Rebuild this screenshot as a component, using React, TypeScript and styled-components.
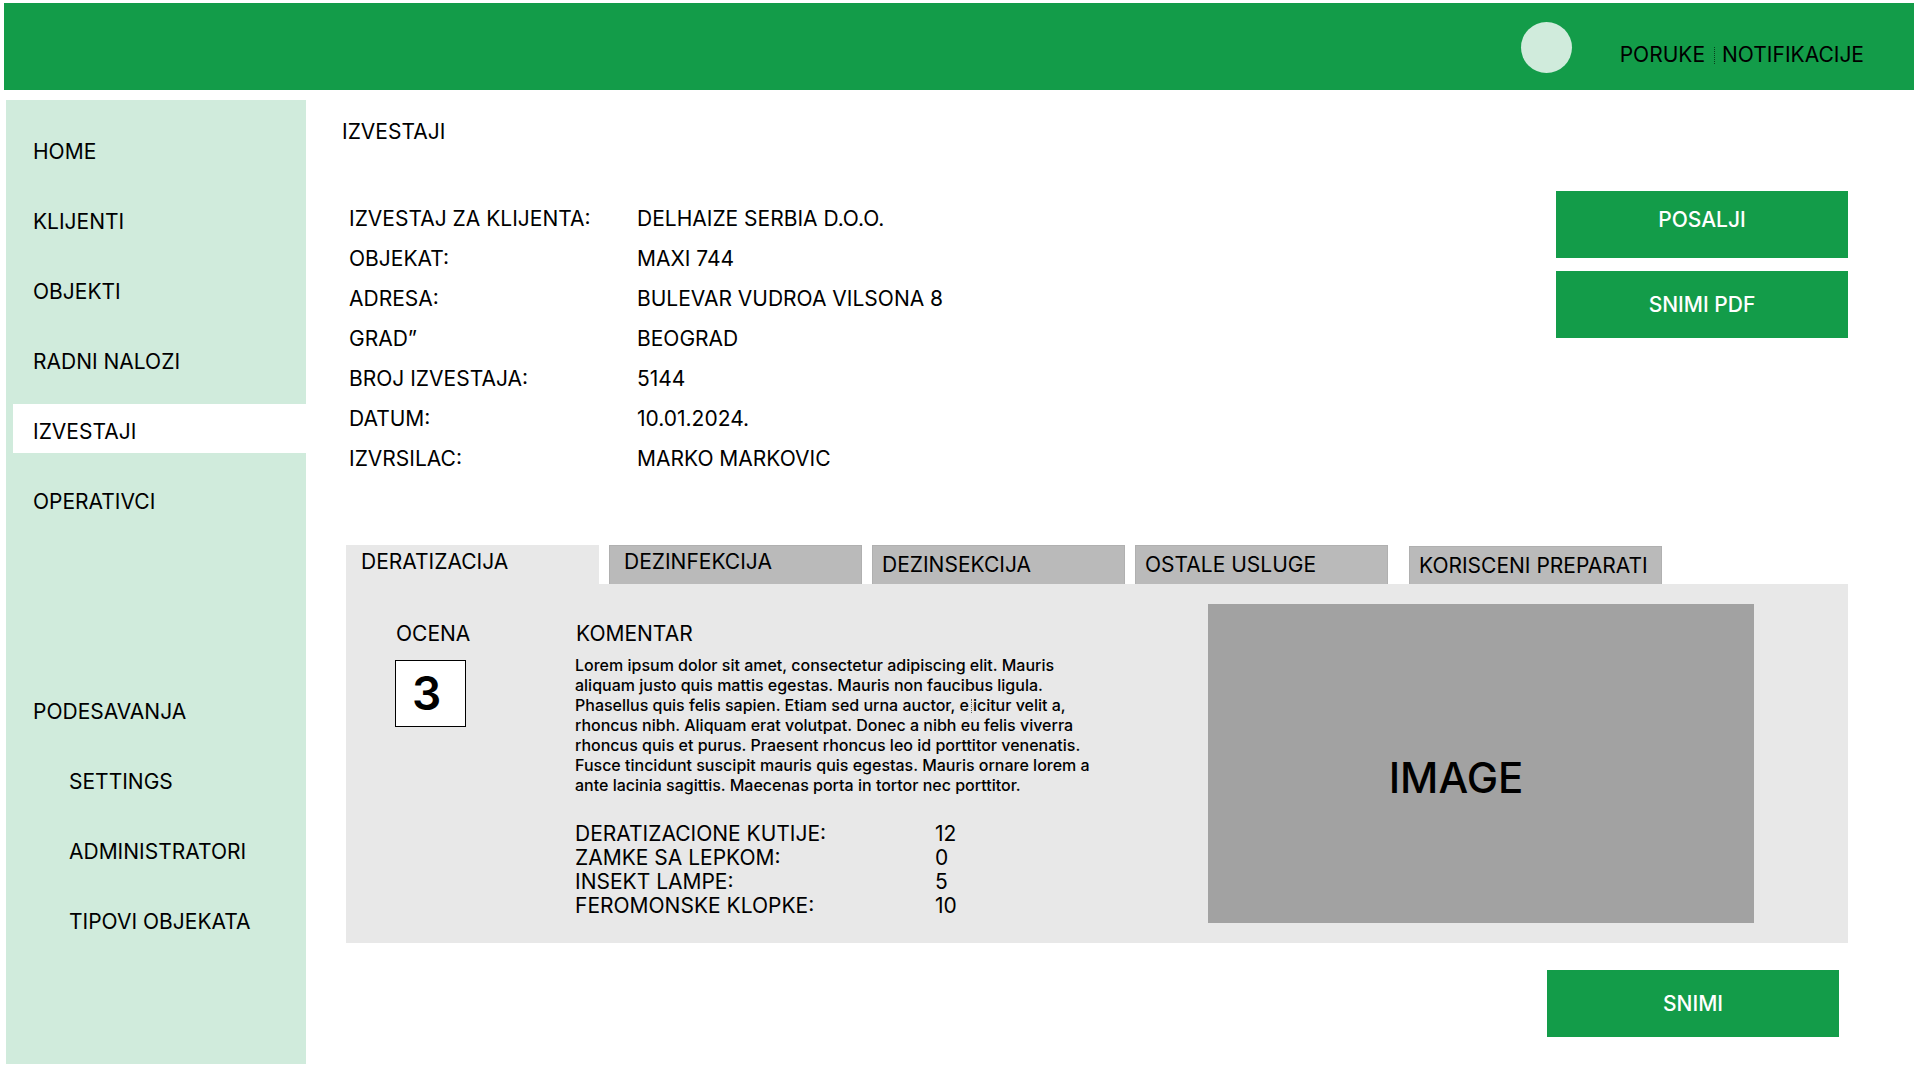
import React, { useState } from "react";
import styled, { createGlobalStyle } from "styled-components";

const color = {
  green: "#139c49",
  mint: "#d0ebdc",
  panel: "#e8e8e8",
  tab: "#bababa",
  tabEdge: "#b0b0b0",
  image: "#a2a2a2",
};

const GlobalStyle = createGlobalStyle`
  *, *::before, *::after { box-sizing: border-box; }
  body {
    margin: 0;
    background: #fff;
    color: #000;
    font-family: Inter, "Liberation Sans", sans-serif;
    font-size: 21px;
    line-height: 26px;
  }
  h1, h2, p, dl, dd, ul { margin: 0; padding: 0; }
  button, input { font: inherit; color: inherit; border-radius: 0; }
  a { color: inherit; text-decoration: none; }
`;

const Page = styled.div`
  min-height: 100vh;
  display: flex;
  flex-direction: column;
  padding: 3px 6px 16px 4px;
`;

const Header = styled.header`
  height: 87px;
  padding: 0 50px 17px;
  display: flex;
  justify-content: flex-end;
  align-items: flex-end;
  gap: 48px;
  background: ${color.green};
`;

const Avatar = styled.div`
  width: 51px;
  height: 51px;
  border-radius: 50%;
  background: ${color.mint};
`;

const HeaderLinks = styled.nav`
  display: flex;
  align-items: center;
  gap: 7px;
  line-height: 36px;
`;

const ThinBar = styled.span`
  display: inline-block;
  width: 3px;
  height: 17px;
  border-right: 1px dotted #000;
  opacity: 0.6;
`;

const InlineBar = styled(ThinBar)`
  height: 14px;
  margin-right: 1px;
  vertical-align: -2px;
`;

const Body = styled.div`
  flex: 1;
  display: flex;
  padding: 10px 0 0 2px;
`;

const Sidebar = styled.nav`
  flex: 0 0 300px;
  padding: 24px 0 24px 7px;
  background: ${color.mint};
`;

const NavList = styled.ul`
  list-style: none;
  display: flex;
  flex-direction: column;
  gap: 21px;

  & + & {
    margin-top: 161px;
  }
`;

const NavLink = styled.a<{ $active?: boolean; $nested?: boolean }>`
  display: flex;
  align-items: center;
  height: 49px;
  padding: 6px 0 0 ${(p) => (p.$nested ? 56 : 20)}px;
  background: ${(p) => (p.$active ? "#fff" : "transparent")};
`;

const Main = styled.main`
  flex: 1;
  min-width: 0;
  padding: 19px 66px 0 36px;
`;

const Title = styled.h1`
  font-size: 21px;
  font-weight: 400;
`;

const Report = styled.div`
  padding-left: 4px;
`;

const Summary = styled.section`
  display: flex;
  justify-content: space-between;
  align-items: flex-start;
  margin-top: 46px;
`;

const Details = styled.dl`
  display: grid;
  grid-template-columns: 288px auto;
  padding: 8px 0 0 3px;
  line-height: 40px;
`;

const Actions = styled.div`
  display: flex;
  flex-direction: column;
  gap: 13px;
`;

const ActionButton = styled.button<{ $raised?: boolean }>`
  width: 292px;
  height: 67px;
  padding: 0 0 ${(p) => (p.$raised ? 10 : 0)}px;
  border: 0;
  background: ${color.green};
  color: #fff;
  font-weight: 500;
  cursor: pointer;
`;

const Tabs = styled.div`
  display: flex;
  align-items: flex-end;
  gap: 10px;
  margin-top: 66px;
`;

const Tab = styled.button<{ $active: boolean; $lead?: boolean; $apart?: boolean }>`
  flex: 0 1 253px;
  height: ${(p) => (p.$apart ? 38 : 39)}px;
  margin-left: ${(p) => (p.$apart ? 11 : 0)}px;
  padding: ${(p) => (p.$lead ? "0 0 6px 14px" : "0 0 0 9px")};
  border: 1px solid ${(p) => (p.$active ? color.panel : color.tabEdge)};
  border-bottom: 0;
  background: ${(p) => (p.$active ? color.panel : color.tab)};
  text-align: left;
  white-space: nowrap;
  cursor: pointer;
`;

const Panel = styled.section`
  display: flex;
  padding: 20px 94px 20px 49px;
  background: ${color.panel};
`;

const Score = styled.div`
  flex: 0 0 180px;
  display: flex;
  flex-direction: column;
  align-items: flex-start;
  gap: 13px;
  padding-top: 17px;
`;

const ScoreLabel = styled.label`
  padding-left: 1px;
`;

const ScoreInput = styled.input`
  width: 71px;
  height: 67px;
  padding: 0 0 2px 16px;
  border: 1px solid #000;
  background: #fff;
  font-size: 46px;
  font-weight: 600;
  line-height: 56px;
`;

const Comment = styled.div`
  flex: 0 1 526px;
  padding-top: 17px;
`;

const CommentTitle = styled.h2`
  padding-left: 1px;
  font-size: 21px;
  font-weight: 400;
`;

const CommentText = styled.p`
  margin-top: 8px;
  font-size: 16px;
  font-weight: 500;
  line-height: 20px;
`;

const Counts = styled.dl`
  display: grid;
  grid-template-columns: 360px auto;
  margin-top: 27px;
  line-height: 24px;
`;

const Picture = styled.div`
  flex: 0 0 546px;
  height: 319px;
  margin-left: auto;
  padding: 28px 50px 0 0;
  display: flex;
  align-items: center;
  justify-content: center;
  background: ${color.image};
  font-size: 42px;
  font-weight: 500;
  line-height: 48px;
`;

const Footer = styled.div`
  display: flex;
  justify-content: flex-end;
  padding: 27px 9px 27px 0;
`;

const mainNav = ["HOME", "KLIJENTI", "OBJEKTI", "RADNI NALOZI", "IZVESTAJI", "OPERATIVCI"];
const settingsNav = ["SETTINGS", "ADMINISTRATORI", "TIPOVI OBJEKATA"];

const details = [
  ["IZVESTAJ ZA KLIJENTA:", "DELHAIZE SERBIA D.O.O."],
  ["OBJEKAT:", "MAXI 744"],
  ["ADRESA:", "BULEVAR VUDROA VILSONA 8"],
  ["GRAD”", "BEOGRAD"],
  ["BROJ IZVESTAJA:", "5144"],
  ["DATUM:", "10.01.2024."],
  ["IZVRSILAC:", "MARKO MARKOVIC"],
];

const tabs = [
  { name: "DERATIZACIJA", lead: true },
  { name: "DEZINFEKCIJA", lead: true },
  { name: "DEZINSEKCIJA" },
  { name: "OSTALE USLUGE" },
  { name: "KORISCENI PREPARATI", apart: true },
];

const counts = [
  ["DERATIZACIONE KUTIJE:", "12"],
  ["ZAMKE SA LEPKOM:", "0"],
  ["INSEKT LAMPE:", "5"],
  ["FEROMONSKE KLOPKE:", "10"],
];

export default function App() {
  const [active, setActive] = useState("DERATIZACIJA");

  return (
    <Page>
      <GlobalStyle />
      <Header>
        <Avatar />
        <HeaderLinks>
          <a href="#poruke">PORUKE</a>
          <ThinBar />
          <a href="#notifikacije">NOTIFIKACIJE</a>
        </HeaderLinks>
      </Header>
      <Body>
        <Sidebar>
          <NavList>
            {mainNav.map((name) => (
              <li key={name}>
                <NavLink href="#" $active={name === "IZVESTAJI"}>{name}</NavLink>
              </li>
            ))}
          </NavList>
          <NavList>
            <li>
              <NavLink href="#">PODESAVANJA</NavLink>
            </li>
            {settingsNav.map((name) => (
              <li key={name}>
                <NavLink href="#" $nested>{name}</NavLink>
              </li>
            ))}
          </NavList>
        </Sidebar>
        <Main>
          <Title>IZVESTAJI</Title>
          <Report>
            <Summary>
              <Details>
                {details.map(([label, value]) => (
                  <React.Fragment key={label}>
                    <dt>{label}</dt>
                    <dd>{value}</dd>
                  </React.Fragment>
                ))}
              </Details>
              <Actions>
                <ActionButton type="button" $raised>POSALJI</ActionButton>
                <ActionButton type="button">SNIMI PDF</ActionButton>
              </Actions>
            </Summary>
            <Tabs role="tablist">
              {tabs.map((tab) => (
                <Tab
                  key={tab.name}
                  type="button"
                  role="tab"
                  aria-selected={active === tab.name}
                  $active={active === tab.name}
                  $lead={tab.lead}
                  $apart={tab.apart}
                  onClick={() => setActive(tab.name)}
                >
                  {tab.name}
                </Tab>
              ))}
            </Tabs>
            <Panel role="tabpanel">
              <Score>
                <ScoreLabel htmlFor="ocena">OCENA</ScoreLabel>
                <ScoreInput id="ocena" type="text" inputMode="numeric" defaultValue="3" />
              </Score>
              <Comment>
                <CommentTitle>KOMENTAR</CommentTitle>
                <CommentText>
                  Lorem ipsum dolor sit amet, consectetur adipiscing elit. Mauris aliquam justo quis
                  mattis egestas. Mauris non faucibus ligula. Phasellus quis felis sapien. Etiam sed
                  urna auctor, e<InlineBar />icitur velit a, rhoncus nibh. Aliquam erat
                  volutpat. Donec a nibh eu felis viverra rhoncus quis et purus. Praesent rhoncus leo
                  id porttitor venenatis. Fusce tincidunt suscipit mauris quis egestas. Mauris ornare
                  lorem a ante lacinia sagittis. Maecenas porta in tortor nec porttitor.
                </CommentText>
                <Counts>
                  {counts.map(([label, value]) => (
                    <React.Fragment key={label}>
                      <dt>{label}</dt>
                      <dd>{value}</dd>
                    </React.Fragment>
                  ))}
                </Counts>
              </Comment>
              <Picture>IMAGE</Picture>
            </Panel>
            <Footer>
              <ActionButton type="button">SNIMI</ActionButton>
            </Footer>
          </Report>
        </Main>
      </Body>
    </Page>
  );
}
